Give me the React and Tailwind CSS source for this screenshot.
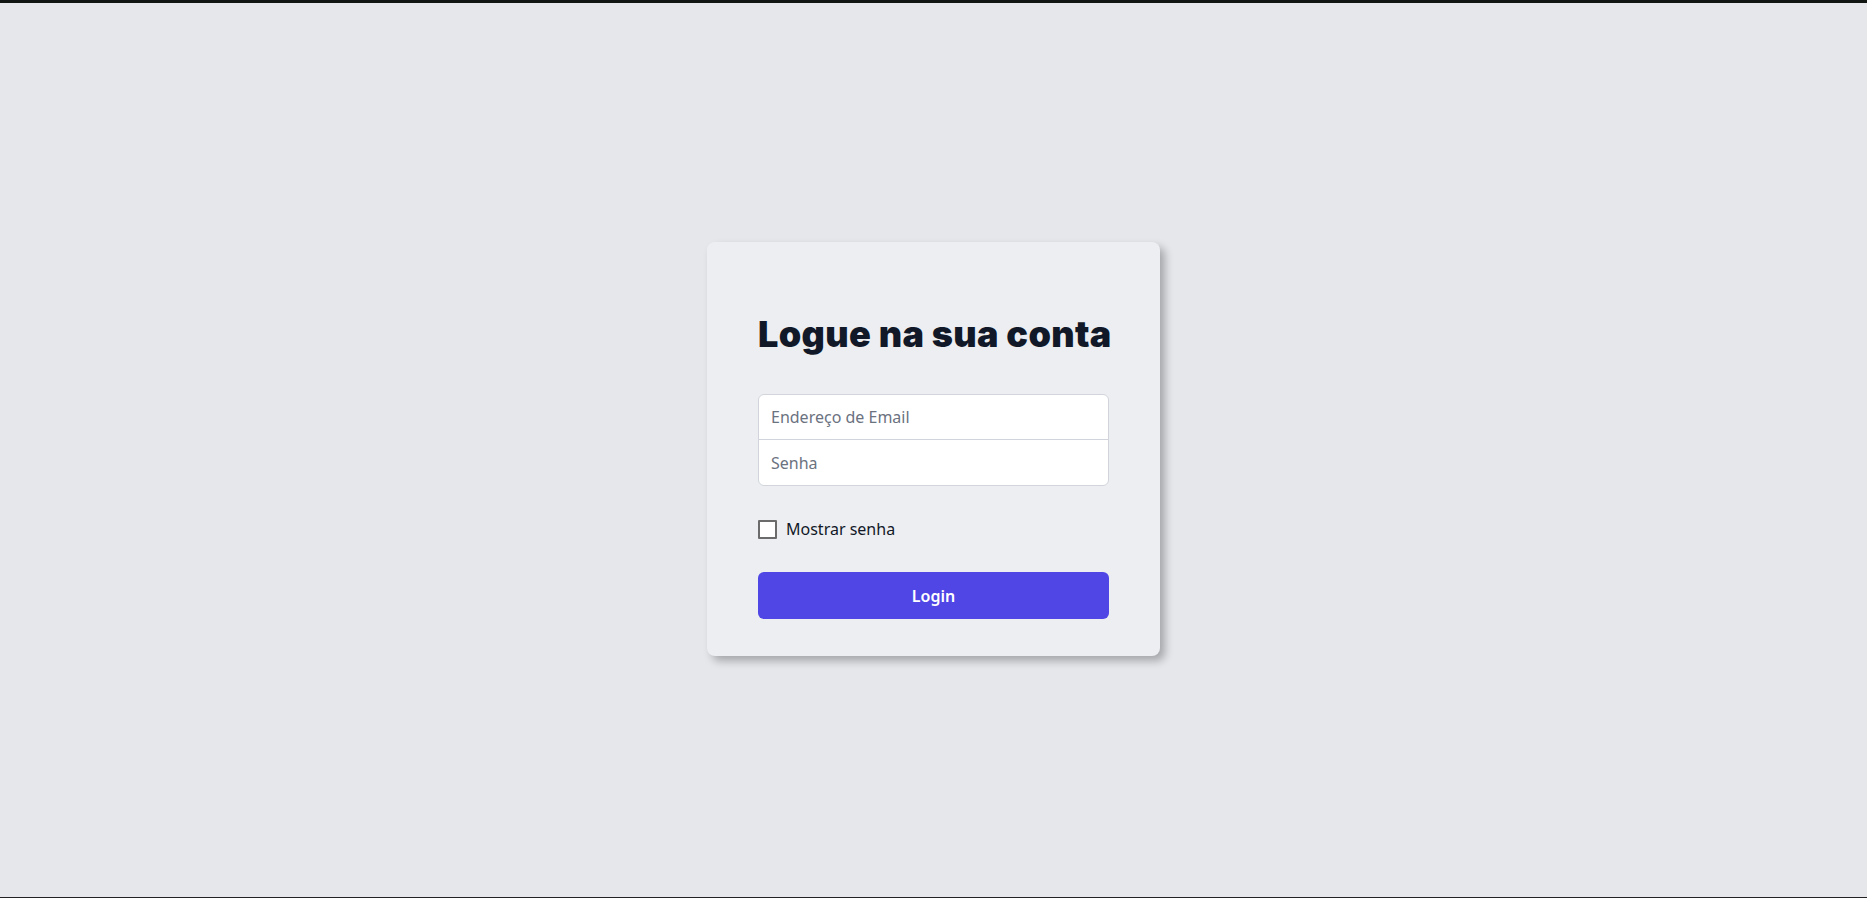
import { useState } from 'react'

export default function App() {
  const [show, setShow] = useState(false)

  return (
    <div className="min-h-screen flex flex-col bg-[#e5e7eb]">
      <div className="h-[3px] bg-[#111613]" />
      <main className="flex-1 flex items-center justify-center font-['Noto_Sans','Open_Sans',sans-serif]">
        <div className="w-[453px] rounded-lg bg-[#edeef2] px-[51px] pt-[72px] pb-[37px] shadow-[5px_5px_9px_rgba(0,0,0,0.28)] mt-[-2px]">
          <h1 className="whitespace-nowrap font-['Inter',sans-serif] text-[36px] leading-10 font-black text-[#111827] tracking-[0.35px]">Logue na sua conta</h1>

          <form className="mt-10" onSubmit={e => e.preventDefault()}>
            <div className="rounded-md border border-[#d1d5db] bg-white">
              <input
                type="email"
                placeholder="Endereço de Email"
                className="block w-full h-[45px] px-3 text-base text-gray-900 placeholder:text-[#6b7280] bg-transparent outline-none border-b border-[#d1d5db] rounded-t-md"
              />
              <input
                type={show ? 'text' : 'password'}
                placeholder="Senha"
                className="block w-full h-[45px] px-3 text-base text-gray-900 placeholder:text-[#6b7280] bg-transparent outline-none rounded-b-md"
              />
            </div>

            <label className="mt-[31px] flex items-center gap-[9px] h-6 text-base text-[#111827] cursor-pointer">
              <input
                type="checkbox"
                checked={show}
                onChange={e => setShow(e.target.checked)}
                className="appearance-none w-[19px] h-[19px] border-2 border-[#6b6b6b] bg-white rounded-[1px]"
              />
              Mostrar senha
            </label>

            <button
              type="submit"
              className="mt-[31px] w-full h-[47px] rounded-md bg-[#4f46e5] text-white text-base font-semibold"
            >
              Login
            </button>
          </form>
        </div>
      </main>
      <div className="h-px bg-[#222]" />
    </div>
  )
}
